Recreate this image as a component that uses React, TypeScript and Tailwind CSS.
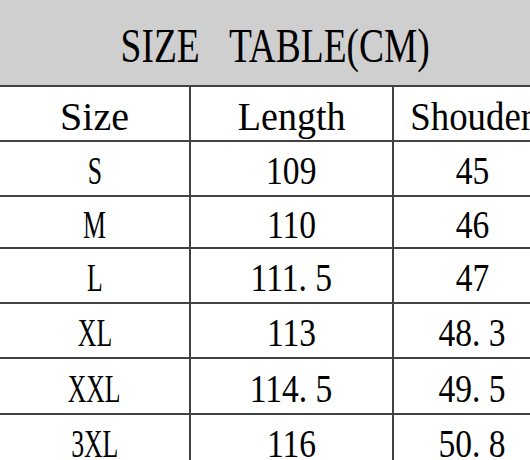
const rows = [
  { size: 'S', length: '109', shoulder: '45', h: 'h-[55px]' },
  { size: 'M', length: '110', shoulder: '46', h: 'h-[52px]' },
  { size: 'L', length: '111.5', shoulder: '47', h: 'h-[55px]' },
  { size: 'XL', length: '113', shoulder: '48.3', h: 'h-[55px]' },
  { size: 'XXL', length: '114.5', shoulder: '49.5', h: 'h-[56px]' },
  { size: '3XL', length: '116', shoulder: '50.8', h: 'h-[55px]' },
];

// the original uses a monospaced CJK serif, so the dot keeps a full cell
function Num({ value }: { value: string }) {
  const [a, b] = value.split('.');
  return (
    <span className="inline-block scale-x-[0.86] leading-none">
      {a}
      {b !== undefined && (
        <>
          <span className="mr-[0.25em]">.</span>
          {b}
        </>
      )}
    </span>
  );
}

export default function App() {
  return (
    <div className="w-[530px] h-[460px] overflow-hidden bg-white font-['Liberation_Serif',serif] text-black">
      <div className="w-[550px]">
        {/* Titulo */}
        <div className="h-[87px] bg-[#d0cfd0] border-b-2 border-[#424242] flex items-center justify-center pt-[6px]">
          <span className="inline-block scale-x-[0.78] text-[48px] leading-none [word-spacing:0.55em]">SIZE TABLE(CM)</span>
        </div>

        {/* Cabecalho */}
        <div className="grid grid-cols-[191px_203px_156px] h-[55px] border-b-2 border-[#424242] text-[40px]">
          <div className="border-r-2 border-[#424242] flex items-center justify-center pt-[6px]">
            <span className="inline-block leading-none">Size</span>
          </div>
          <div className="border-r-2 border-[#424242] flex items-center justify-center pt-[6px]">
            <span className="inline-block scale-x-[0.95] leading-none">Length</span>
          </div>
          <div className="flex items-center justify-center pt-[6px]">
            <span className="inline-block scale-x-[0.92] leading-none">Shouder</span>
          </div>
        </div>

        {rows.map((r) => (
          <div
            key={r.size}
            className={`grid grid-cols-[191px_203px_156px] ${r.h} border-b-2 border-[#424242] text-[39px]`}
          >
            <div className="border-r-2 border-[#424242] flex items-center justify-center pt-[4px]">
              <span className="inline-block scale-x-[0.66] leading-none">{r.size}</span>
            </div>
            <div className="border-r-2 border-[#424242] flex items-center justify-center pt-[4px]">
              <Num value={r.length} />
            </div>
            <div className="flex items-center justify-center pt-[4px]">
              <Num value={r.shoulder} />
            </div>
          </div>
        ))}
      </div>
    </div>
  );
}
